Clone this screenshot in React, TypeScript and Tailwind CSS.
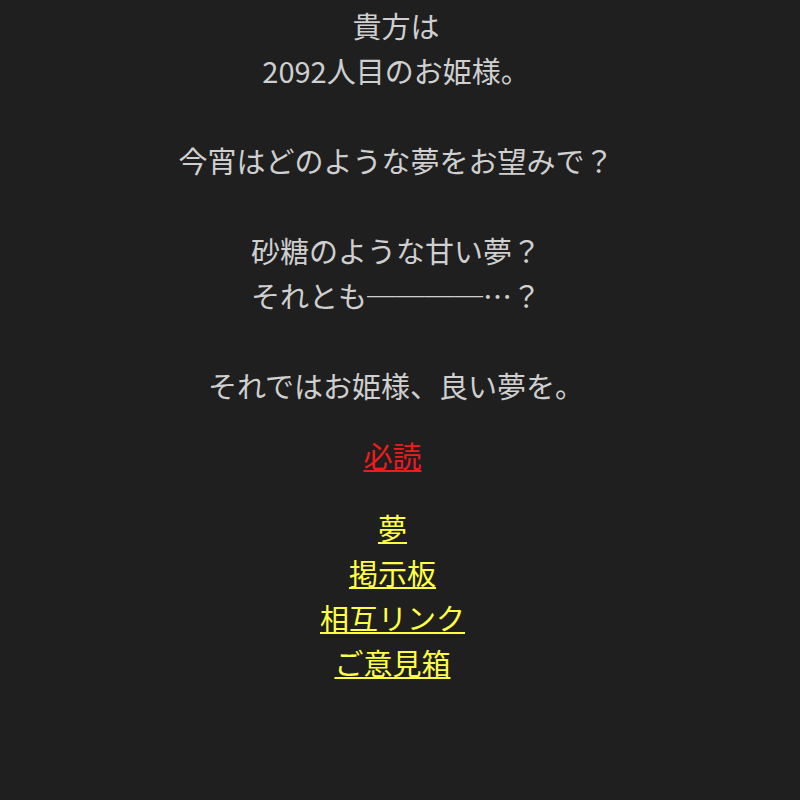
import React from "react";

const linkCls =
  "text-[#ffff44] underline underline-offset-[2px] decoration-[1.5px]";

export default function App() {
  return (
    <div className="min-h-screen w-full bg-[#201f20] text-center text-[29px] leading-[45px] text-[#cfcfcf] [font-family:'Noto_Sans_CJK_JP','Noto_Sans',sans-serif] pt-[3px] pr-[8px]">
      <p>
        貴方は
        <br />
        2092人目のお姫様。
        <br />
        <br />
        今宵はどのような夢をお望みで？
        <br />
        <br />
        砂糖のような甘い夢？
        <br />
        それとも────…？
        <br />
        <br />
        それではお姫様、良い夢を。
      </p>
      <p className="mt-[25px] pr-[7px]">
        <a href="#" className="text-[#ee1c1c] underline underline-offset-[2px] decoration-[1.5px]">
          必読
        </a>
      </p>
      <div className="mt-[27px] flex flex-col items-center pr-[7px]">
        <a href="#" className={linkCls}>夢</a>
        <a href="#" className={linkCls}>掲示板</a>
        <a href="#" className={linkCls}>相互リンク</a>
        <a href="#" className={linkCls}>ご意見箱</a>
      </div>
    </div>
  );
}
